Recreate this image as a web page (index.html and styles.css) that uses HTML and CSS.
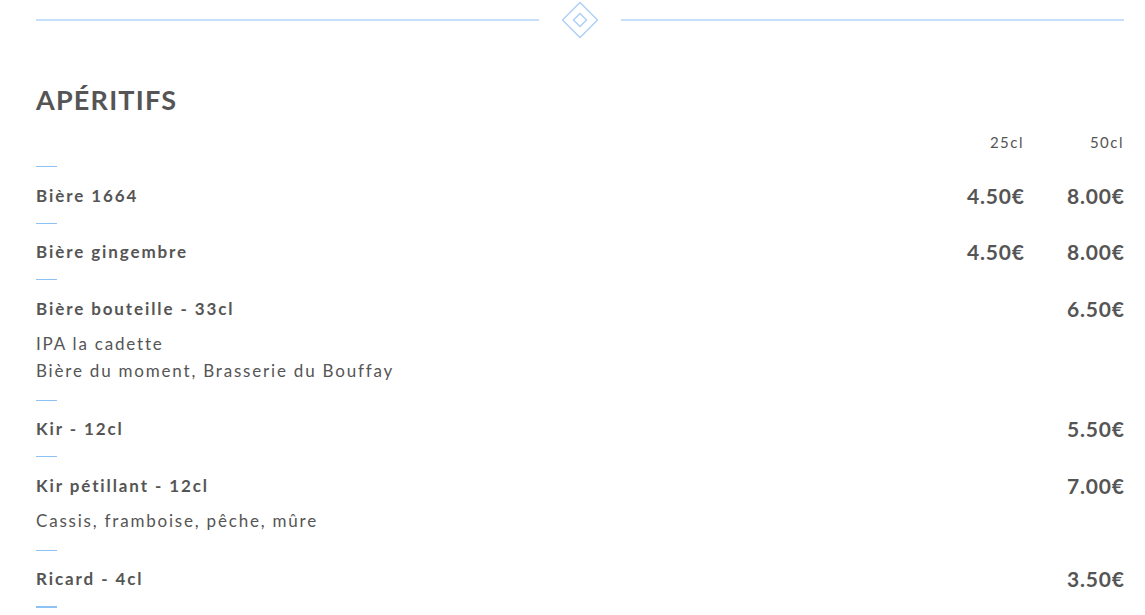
FILE: index.html
```html
<!DOCTYPE html>
<html lang="fr">
<head>
<meta charset="utf-8">
<title>Apéritifs</title>
<link rel="stylesheet" href="styles.css">
</head>
<body>
<div class="page">
  <div class="divider">
    <span class="divider-line"></span>
    <svg class="divider-icon" width="38" height="38" viewBox="0 0 38 38" aria-hidden="true">
      <polygon points="19,1.5 36.5,19 19,36.5 1.5,19" fill="none" stroke="#a9cdf6" stroke-width="1.3"/>
      <polygon points="19,12.5 25.5,19 19,25.5 12.5,19" fill="none" stroke="#a9cdf6" stroke-width="1.3"/>
    </svg>
    <span class="divider-line"></span>
  </div>

  <h2 class="section-title">APÉRITIFS</h2>

  <div class="col-head">
    <span class="spacer"></span>
    <span class="size">25cl</span>
    <span class="size">50cl</span>
  </div>

  <div class="item">
    <div class="rule"></div>
    <div class="row"><span class="name">Bière 1664</span><span class="price">4.50€</span><span class="price">8.00€</span></div>
  </div>

  <div class="item">
    <div class="rule"></div>
    <div class="row"><span class="name">Bière gingembre</span><span class="price">4.50€</span><span class="price">8.00€</span></div>
  </div>

  <div class="item">
    <div class="rule"></div>
    <div class="row"><span class="name">Bière bouteille - 33cl</span><span class="price"></span><span class="price">6.50€</span></div>
    <p class="desc">IPA la cadette<br>Bière du moment, Brasserie du Bouffay</p>
  </div>

  <div class="item">
    <div class="rule"></div>
    <div class="row"><span class="name">Kir - 12cl</span><span class="price"></span><span class="price">5.50€</span></div>
  </div>

  <div class="item">
    <div class="rule"></div>
    <div class="row"><span class="name">Kir pétillant - 12cl</span><span class="price"></span><span class="price">7.00€</span></div>
    <p class="desc">Cassis, framboise, pêche, mûre</p>
  </div>

  <div class="item">
    <div class="rule"></div>
    <div class="row"><span class="name">Ricard - 4cl</span><span class="price"></span><span class="price">3.50€</span></div>
  </div>

  <div class="item">
    <div class="rule rule-last"></div>
  </div>
</div>
</body>
</html>
```

FILE: styles.css
```css
html, body {
  margin: 0;
  padding: 0;
  background: #ffffff;
}

body {
  font-family: Lato, "Open Sans", Arial, sans-serif;
  color: #555555;
}

.page {
  width: 1088px;
  padding: 1px 0 0 36px;
}

.divider {
  display: flex;
  align-items: center;
  gap: 22px;
  height: 38px;
}

.divider-line {
  flex: 1;
  height: 2px;
  background: #c6dffb;
}

.divider-icon {
  display: block;
  flex: none;
}

.section-title {
  margin: 44px 0 0;
  font-size: 27px;
  line-height: 34px;
  font-weight: 700;
  letter-spacing: 1.2px;
  color: #555555;
}

.col-head {
  display: grid;
  grid-template-columns: 1fr 100px 100px;
  margin-top: 15px;
  height: 20px;
  line-height: 20px;
  font-size: 15px;
  letter-spacing: 1.5px;
}

.col-head .size {
  text-align: right;
}

.item {
  display: flex;
  flex-direction: column;
}

.col-head + .item {
  margin-top: 14px;
}

.rule {
  width: 21px;
  height: 1px;
  background: #8ec2f6;
}

.rule-last {
  height: 2px;
}

.row {
  display: grid;
  grid-template-columns: 1fr 100px 100px;
  align-items: center;
  height: 24px;
  margin: 15.5px 0 16px;
}

.name {
  font-size: 17px;
  font-weight: 700;
  letter-spacing: 1.9px;
}

.price {
  text-align: right;
  font-size: 21px;
  font-weight: 700;
  letter-spacing: 0.8px;
  margin-right: -0.8px;
}

.desc {
  margin: -6px 0 16px;
  font-size: 17px;
  line-height: 27px;
  letter-spacing: 1.8px;
}
```
